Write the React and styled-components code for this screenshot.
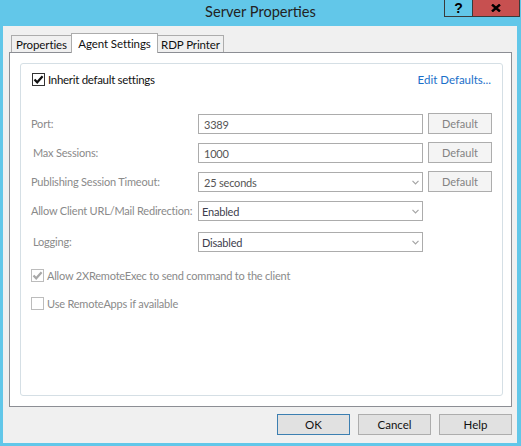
import React from "react";
import styled, { createGlobalStyle } from "styled-components";

const Global = createGlobalStyle`
  html, body { margin: 0; padding: 0; }
  body {
    width: 521px; height: 446px; overflow: hidden;
    font-family: Lato, "Noto Sans", sans-serif;
    font-size: 11px;
    letter-spacing: -0.2px;
  }
  * { box-sizing: border-box; }
`;

const Window = styled.div`
  width: 521px;
  height: 446px;
  background: #62c7e9;
  display: flex;
  flex-direction: column;
`;

const TitleBar = styled.div`
  height: 26px;
  display: grid;
  grid-template-columns: 1fr auto 1fr;
  align-items: start;
`;

const Title = styled.div`
  grid-column: 2;
  font-size: 14.6px;
  letter-spacing: 0;
  line-height: 20px;
  padding-top: 2px;
  color: #222;
`;

const Caption = styled.div`
  grid-column: 3;
  justify-self: end;
  display: flex;
  margin-right: 1px;
`;

const CaptionButton = styled.div`
  height: 17px;
  width: ${(p) => p.$w}px;
  background: ${(p) => p.$bg};
  border: 1px solid #3a3a3a;
  border-top: none;
  border-left: ${(p) => (p.$first ? "1px solid #3a3a3a" : "none")};
  display: flex;
  align-items: center;
  justify-content: center;
  font-family: "Liberation Sans", Arial, sans-serif;
  font-weight: bold;
  font-size: 14px;
  color: #000;
`;

const Body = styled.div`
  flex: 1;
  margin: 0 4px 3px 3px;
  background: #f0f0f0;
  padding: 7px 5px 8px 6px;
  display: flex;
  flex-direction: column;
`;

const TabStrip = styled.div`
  height: 19px;
  display: flex;
  align-items: flex-end;
  padding-left: 2px;
  font-size: 11.5px;
  letter-spacing: -0.1px;
`;

const Tab = styled.div`
  width: ${(p) => p.$w}px;
  height: ${(p) => (p.$active ? 20 : 17)}px;
  margin: ${(p) => (p.$active ? "0 -1px -1px -1px" : "0")};
  background: ${(p) => (p.$active ? "#fff" : "#f0f0f0")};
  border: 1px solid #acacac;
  border-bottom: none;
  position: ${(p) => (p.$active ? "relative" : "static")};
  z-index: ${(p) => (p.$active ? 1 : "auto")};
  display: flex;
  align-items: center;
  justify-content: center;
  color: #111;
  white-space: nowrap;
  padding-bottom: ${(p) => (p.$active ? 1 : 0)}px;
`;

const Panel = styled.div`
  flex: 1;
  background: #fff;
  border: 1px solid #8c8e94;
  padding: 10px;
  display: flex;
`;

const Group = styled.div`
  flex: 1;
  border: 1px solid #d5dfe5;
  border-radius: 3px;
  padding: 8px 10px 9px 10px;
  display: flex;
  flex-direction: column;
`;

const TopRow = styled.div`
  height: 14px;
  display: flex;
  align-items: center;
  justify-content: space-between;
`;

const Link = styled.span`
  color: #1a6fc9;
  font-size: 11.5px;
  letter-spacing: 0;
  margin-right: 1px;
`;

const CheckRow = styled.label`
  display: flex;
  align-items: center;
  gap: 3px;
  height: 14px;
  white-space: nowrap;
  font-size: ${(p) => (p.$big ? 11.5 : 11)}px;
  letter-spacing: ${(p) => (p.$big ? -0.3 : -0.2)}px;
  margin-left: ${(p) => p.$indent || 0}px;
  margin-top: ${(p) => p.$mt || 0}px;
  color: ${(p) => (p.$disabled ? "#8a8a8a" : "#111")};
`;

const Box = styled.span`
  width: 13px;
  height: 13px;
  border: 1px solid ${(p) => (p.$disabled ? "#bcbcbc" : "#333")};
  background: #fff;
  display: flex;
  align-items: center;
  justify-content: center;
`;

const Fields = styled.div`
  margin-top: 27px;
  display: flex;
  flex-direction: column;
  gap: 8px;
`;

const FieldRow = styled.div`
  height: 21px;
  display: flex;
  align-items: center;
  margin-top: ${(p) => p.$mt || 0}px;
`;

const Label = styled.div`
  width: 167px;
  white-space: nowrap;
  padding-left: ${(p) => p.$indent || 0}px;
  color: #8a8a8a;
`;

const TextBox = styled.div`
  width: 225px;
  height: 20px;
  align-self: flex-end;
  border: 1px solid #acacac;
  background: #fff;
  padding: 0 3px 0 ${(p) => p.$pad}px;
  display: flex;
  align-items: center;
  justify-content: space-between;
  color: ${(p) => p.$color || "#555"};
`;

const DefaultButton = styled.div`
  width: 64px;
  height: 21px;
  margin-left: 5px;
  background: #f4f4f4;
  border: 1px solid #adadad;
  display: flex;
  align-items: center;
  justify-content: center;
  color: #838383;
  letter-spacing: 0;
`;

const Buttons = styled.div`
  margin-top: 7px;
  display: flex;
  justify-content: flex-end;
  gap: 8px;
`;

const DlgButton = styled.div`
  width: 73px;
  height: 21px;
  background: #e1e1e1;
  border: 1px solid ${(p) => (p.$primary ? "#3c7fb1" : "#adadad")};
  display: flex;
  align-items: center;
  justify-content: center;
  color: #111;
  font-size: 11.5px;
  letter-spacing: 0;
`;

const Chevron = () => (
  <svg width="7" height="5" viewBox="0 0 7 5">
    <path d="M0.5 0.8 L3.5 3.8 L6.5 0.8" fill="none" stroke="#a5a5a5" strokeWidth="1.2" />
  </svg>
);

const Check = ({ color }) => (
  <svg width="11" height="11" viewBox="0 0 11 11">
    <path d="M1.5 5.5 L4.2 8.3 L9.6 2.2" fill="none" stroke={color} strokeWidth="2.2" />
  </svg>
);

const CloseGlyph = () => (
  <svg width="10" height="8" viewBox="0 0 10 8">
    <path d="M1 0.5 L9 7.5 M9 0.5 L1 7.5" stroke="#000" strokeWidth="2.4" />
  </svg>
);

export default function App() {
  return (
    <>
      <Global />
      <Window>
        <TitleBar>
          <Title>Server Properties</Title>
          <Caption>
            <CaptionButton $w={29} $bg="#62c7e9" $first>?</CaptionButton>
            <CaptionButton $w={47} $bg="#c75050">
              <CloseGlyph />
            </CaptionButton>
          </Caption>
        </TitleBar>
        <Body>
          <TabStrip>
            <Tab $w={61}>Properties</Tab>
            <Tab $w={87} $active>Agent Settings</Tab>
            <Tab $w={67}>RDP Printer</Tab>
          </TabStrip>
          <Panel>
            <Group>
              <TopRow>
                <CheckRow $indent={1} $big>
                  <Box>
                    <Check color="#111" />
                  </Box>
                  Inherit default settings
                </CheckRow>
                <Link>Edit Defaults...</Link>
              </TopRow>
              <Fields>
                <FieldRow>
                  <Label>Port:</Label>
                  <TextBox $pad={5}>3389</TextBox>
                  <DefaultButton>Default</DefaultButton>
                </FieldRow>
                <FieldRow>
                  <Label $indent={2}>Max Sessions:</Label>
                  <TextBox $pad={5}>1000</TextBox>
                  <DefaultButton>Default</DefaultButton>
                </FieldRow>
                <FieldRow>
                  <Label>Publishing Session Timeout:</Label>
                  <TextBox $pad={5}>
                    25 seconds
                    <Chevron />
                  </TextBox>
                  <DefaultButton>Default</DefaultButton>
                </FieldRow>
                <FieldRow>
                  <Label>Allow Client URL/Mail Redirection:</Label>
                  <TextBox $pad={3} $color="#3d3d4d">
                    Enabled
                    <Chevron />
                  </TextBox>
                </FieldRow>
                <FieldRow $mt={2}>
                  <Label $indent={2}>Logging:</Label>
                  <TextBox $pad={3} $color="#3d3d4d">
                    Disabled
                    <Chevron />
                  </TextBox>
                </FieldRow>
              </Fields>
              <CheckRow $disabled $mt={16}>
                <Box $disabled>
                  <Check color="#a8a8a8" />
                </Box>
                Allow 2XRemoteExec to send command to the client
              </CheckRow>
              <CheckRow $disabled $mt={14}>
                <Box $disabled />
                Use RemoteApps if available
              </CheckRow>
            </Group>
          </Panel>
          <Buttons>
            <DlgButton $primary>OK</DlgButton>
            <DlgButton>Cancel</DlgButton>
            <DlgButton>Help</DlgButton>
          </Buttons>
        </Body>
      </Window>
    </>
  );
}
